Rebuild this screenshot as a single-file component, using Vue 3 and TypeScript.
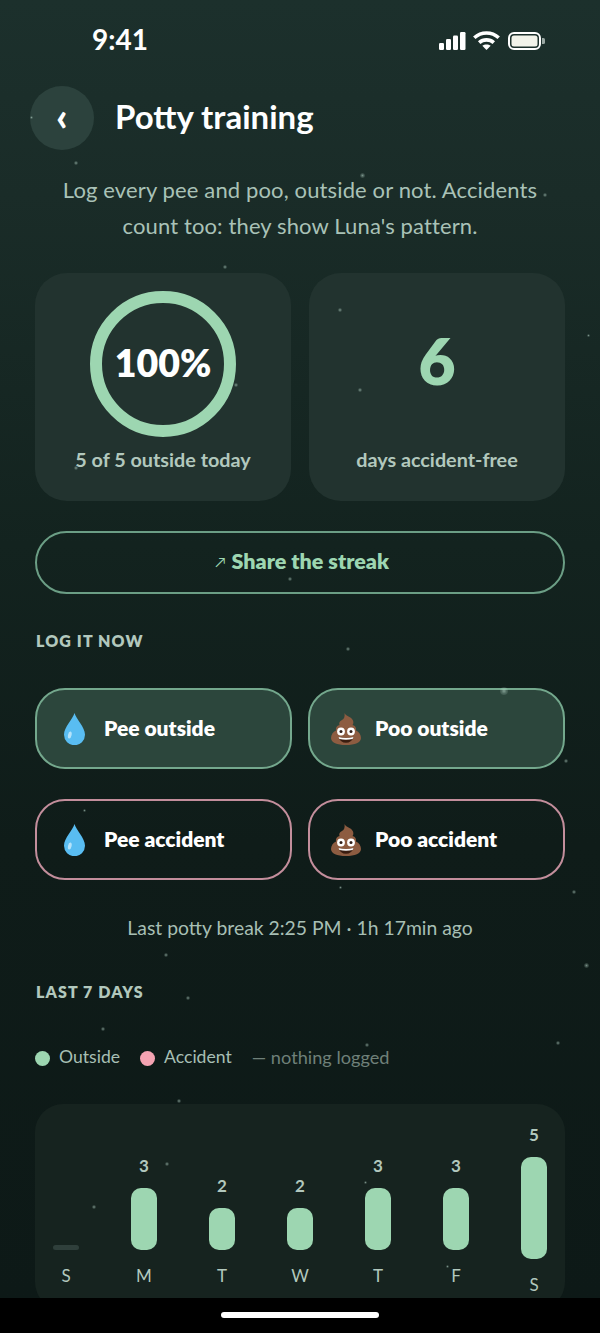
<script setup lang="ts">
interface Day {
  label: string;
  count: number;
}

interface LogButton {
  text: string;
  kind: 'pee' | 'poo';
  tone: 'good' | 'bad';
}

const days: Day[] = [
  { label: 'S', count: 0 },
  { label: 'M', count: 3 },
  { label: 'T', count: 2 },
  { label: 'W', count: 2 },
  { label: 'T', count: 3 },
  { label: 'F', count: 3 },
  { label: 'S', count: 5 },
];

const buttons: LogButton[] = [
  { text: 'Pee outside', kind: 'pee', tone: 'good' },
  { text: 'Poo outside', kind: 'poo', tone: 'good' },
  { text: 'Pee accident', kind: 'pee', tone: 'bad' },
  { text: 'Poo accident', kind: 'poo', tone: 'bad' },
];

// bar height grows with the count, an empty day only gets a small dash
const barHeight = (count: number) => (count === 0 ? 5 : 20 * count + 2);
const barOffset = (count: number) => Math.max(0, 93 - barHeight(count));

// background specks: x, y, size
const stars: number[][] = [
  [74, 161, 4], [360, 173, 5], [543, 193, 4], [30, 116, 3], [223, 265, 4],
  [338, 308, 4], [358, 388, 4], [234, 383, 4], [74, 466, 4], [288, 577, 4],
  [587, 334, 3], [346, 647, 4], [500, 687, 8], [564, 759, 4], [83, 809, 3],
  [339, 886, 3], [572, 890, 4], [186, 996, 4], [101, 1027, 4], [365, 1043, 4],
  [556, 1041, 4], [177, 1099, 4], [165, 1162, 4], [92, 1205, 4], [364, 1181, 3],
  [446, 1265, 3], [164, 953, 4], [584, 963, 5],
];
</script>

<template>
  <div class="phone">
    <div class="screen">
      <div class="status-bar">
        <span class="clock">9:41</span>
        <div class="status-icons">
          <svg width="27" height="18" viewBox="0 0 27 18" fill="#fff">
            <rect x="0" y="11" width="5" height="7" rx="1.2" />
            <rect x="7" y="7" width="5" height="11" rx="1.2" />
            <rect x="14" y="3.5" width="5" height="14.5" rx="1.2" />
            <rect x="21" y="0" width="5.5" height="18" rx="1.2" />
          </svg>
          <svg width="27" height="19" viewBox="0 0 27 19" fill="none" stroke="#fff" stroke-width="3.6">
            <path d="M1.300 6.800C8.200 .4 18.800 .4 25.700 6.800" />
            <path d="M6.200 11.600C10.300 7.900 16.700 7.900 20.800 11.600" />
            <path d="M13.500 19L9.300 14.800C11.700 13 15.300 13 17.700 14.800Z" fill="#fff" stroke="none" />
          </svg>
          <svg class="battery" width="37" height="18" viewBox="0 0 37 18">
            <rect x="1" y="1" width="31" height="16" rx="5" fill="none" stroke="#fff" stroke-width="2" />
            <rect x="3.500" y="3.500" width="26" height="11" rx="2.500" fill="#f2f3ea" />
            <path d="M34 6h1.500a1.500 1.500 0 0 1 1.500 1.500v3a1.500 1.500 0 0 1-1.500 1.500H34z" fill="#9aa8a3" />
          </svg>
        </div>
      </div>

      <div class="header">
        <button class="back">‹</button>
        <h1>Potty training</h1>
      </div>

      <p class="intro">Log every pee and poo, outside or not. Accidents<br />count too: they show Luna's pattern.</p>

      <div class="stats">
        <div class="stat-card">
          <div class="ring"><span>100%</span></div>
          <div class="stat-caption">5 of 5 outside today</div>
        </div>
        <div class="stat-card">
          <div class="big-number"><span>6</span></div>
          <div class="stat-caption">days accident-free</div>
        </div>
      </div>

      <button class="share"><span class="share-arrow">↗</span>Share the streak</button>

      <h2 class="section-title">LOG IT NOW</h2>

      <div class="log-grid">
        <button v-for="b in buttons" :key="b.text" class="log-btn" :class="b.tone">
          <span class="log-icon" :class="b.kind">
            <svg v-if="b.kind === 'pee'" width="21" height="32" viewBox="0 0 21 32">
              <path d="M10.500 0C9 6 0 14 0 21.800A10.300 10.200 0 0 0 21 21.800C21 14 12 6 10.500 0Z" fill="#59bdf2" />
              <ellipse cx="5.800" cy="22" rx="1.800" ry="3.600" fill="#b5e3fa" transform="rotate(12 5.800 22)" />
            </svg>
            <svg v-else width="30" height="32" viewBox="0 0 30 32">
              <path
                d="M13.500 0C14.500 3 20.500 3.500 22 7.500C22.700 9.500 22.300 11 21.500 12C24.300 12.600 25.500 15 25 17.500C28 19 30 21.800 30 25C30 29.500 24 32 15 32C6 32 0 29.500 0 25C0 21.800 2 19 5 17.500C4.500 15 5.700 12.600 8.500 12C7.700 10 8.500 8 11 7C13.200 6 14 3.500 13.500 0Z"
                fill="#8d5c41"
              />
              <circle cx="10" cy="18.500" r="3.900" fill="#fff" />
              <circle cx="20" cy="18.500" r="3.900" fill="#fff" />
              <circle cx="10" cy="18.500" r="1.500" fill="#33201a" />
              <circle cx="20" cy="18.500" r="1.500" fill="#33201a" />
              <path d="M7.500 24Q15 26 22.500 24Q20.500 29.800 15 29.800Q9.500 29.800 7.500 24Z" fill="#3a1d10" />
              <path d="M7.500 24Q15 26 22.500 24L21.600 26Q15 27.600 8.400 26Z" fill="#fff" />
            </svg>
          </span>
          {{ b.text }}
        </button>
      </div>

      <p class="last-break">Last potty break 2:25 PM · 1h 17min ago</p>

      <h2 class="section-title days-title">LAST 7 DAYS</h2>

      <div class="legend">
        <span class="legend-item"><i class="dot dot-good"></i>Outside</span>
        <span class="legend-item"><i class="dot dot-bad"></i>Accident</span>
        <span class="legend-muted">— nothing logged</span>
      </div>

      <div class="chart">
        <div
          v-for="(d, i) in days"
          :key="i"
          class="chart-col"
          :style="{ marginTop: barOffset(d.count) + 'px' }"
        >
          <span class="chart-count">{{ d.count > 0 ? d.count : '' }}</span>
          <div
            class="chart-bar"
            :class="{ empty: d.count === 0 }"
            :style="{ height: barHeight(d.count) + 'px' }"
          ></div>
          <span class="chart-day">{{ d.label }}</span>
        </div>
      </div>

      <span
        v-for="(s, i) in stars"
        :key="'star' + i"
        class="star"
        :style="{ left: s[0] + 'px', top: s[1] + 'px', width: s[2] + 'px', height: s[2] + 'px' }"
      ></span>
    </div>

    <div class="home-bar"><div class="home-indicator"></div></div>
  </div>
</template>

<style>
html,
body {
  margin: 0;
  background: #000;
}
</style>

<style scoped>
.phone {
  width: 600px;
  height: 1333px;
  overflow: hidden;
  display: flex;
  flex-direction: column;
  font-family: Lato, "Noto Sans", sans-serif;
  color: #fff;
}

.screen {
  position: relative;
  height: 1298px;
  flex: none;
  overflow: hidden;
  background: linear-gradient(180deg, #1c302c 0%, #1a2c28 15%, #13231f 42%, #0f1c19 65%, #0d1917 100%);
}

.status-bar {
  height: 80px;
  box-sizing: border-box;
  padding: 0 55px 0 92px;
  display: flex;
  align-items: center;
  justify-content: space-between;
}

.clock {
  margin-bottom: 2px;
  font-size: 28px;
  font-weight: 700;
}

.status-icons {
  margin-top: 1px;
  display: flex;
  align-items: center;
  gap: 7px;
}

.battery {
  margin-left: 1px;
}

.header {
  margin-top: 6px;
  padding-left: 30px;
  display: flex;
  align-items: center;
  gap: 21px;
}

.back {
  width: 64px;
  height: 64px;
  padding: 0 0 5px;
  border: none;
  border-radius: 50%;
  background: #2c423d;
  color: #fff;
  font-family: inherit;
  font-size: 40px;
  font-weight: 900;
  line-height: 1;
}

h1 {
  margin: 0 0 4px;
  font-size: 33px;
  font-weight: 700;
}

.intro {
  margin: 22px 0 0;
  text-align: center;
  font-size: 22px;
  letter-spacing: 0.13px;
  line-height: 36px;
  color: #a9c2b7;
}

.stats {
  margin: 29px 35px 0;
  display: flex;
  gap: 18px;
}

.stat-card {
  flex: 1;
  height: 228px;
  box-sizing: border-box;
  padding-top: 18px;
  display: flex;
  flex-direction: column;
  align-items: center;
  border-radius: 32px;
  background: #22332f;
}

.ring {
  width: 146px;
  height: 146px;
  box-sizing: border-box;
  border: 12px solid #9dd6b1;
  border-radius: 50%;
  padding-bottom: 4px;
  display: flex;
  align-items: center;
  justify-content: center;
  font-size: 37.500px;
  font-weight: 800;
}

.big-number {
  height: 146px;
  padding-bottom: 7px;
  box-sizing: border-box;
  display: flex;
  align-items: center;
  font-size: 64px;
  font-weight: 800;
  color: #9dd6b1;
}

.stat-caption {
  margin-top: 10px;
  font-size: 19.800px;
  line-height: 24px;
  font-weight: 700;
  color: #b2c8bd;
}

.share {
  margin: 30px 35px 0;
  width: 530px;
  height: 63px;
  padding: 0 0 3px 4px;
  display: flex;
  align-items: center;
  justify-content: center;
  gap: 6px;
  border: 2px solid #6b9e85;
  border-radius: 32px;
  background: transparent;
  color: #9dd6b1;
  font-family: inherit;
  font-size: 21.500px;
  font-weight: 800;
}

.share-arrow {
  font-size: 14px;
  font-weight: 400;
}

.section-title {
  margin: 37px 36px 0;
  font-size: 16px;
  line-height: 20px;
  font-weight: 800;
  letter-spacing: 1.100px;
  color: #b2c8bd;
}

.log-grid {
  margin: 37px 35px 0;
  display: grid;
  grid-template-columns: 257px 257px;
  gap: 30px 16px;
}

.log-btn {
  height: 81px;
  padding: 0 0 3px 27px;
  display: flex;
  align-items: center;
  border-radius: 30px;
  color: #fff;
  font-family: inherit;
  font-size: 21px;
  font-weight: 800;
}

.log-btn.good {
  border: 2px solid #74a88d;
  background: #2c463c;
}

.log-btn.bad {
  border: 2px solid #c38e9c;
  background: transparent;
}

.log-icon {
  margin-top: 3px;
  display: flex;
  align-items: center;
}

.log-icon.pee {
  width: 40px;
}

.log-icon.poo {
  width: 44px;
  margin-left: -6px;
}

.last-break {
  margin: 35px 0 0;
  text-align: center;
  font-size: 19.350px;
  line-height: 26px;
  color: #a7bfb4;
}

.days-title {
  margin-top: 41px;
}

.legend {
  margin: 43px 35px 0;
  display: flex;
  align-items: center;
  gap: 20px;
  font-size: 17.600px;
  line-height: 24px;
  color: #a7bfb4;
}

.legend-item {
  display: flex;
  align-items: center;
  gap: 9px;
}

.dot {
  width: 15px;
  height: 15px;
  border-radius: 50%;
  margin-top: 2px;
}

.dot-good {
  background: #9dd6b1;
}

.dot-bad {
  background: #f4a3b2;
}

.legend-muted {
  font-size: 18.200px;
  color: #6f8079;
}

.chart {
  margin: 35px 35px 0;
  height: 206px;
  box-sizing: border-box;
  padding: 22px 18px 0;
  display: flex;
  justify-content: space-between;
  align-items: flex-start;
  border-radius: 28px;
  background: #16231f;
}

.chart-col {
  width: 26px;
  display: flex;
  flex-direction: column;
  align-items: center;
}

.chart-count {
  height: 18px;
  margin-bottom: 13px;
  font-size: 17px;
  line-height: 18px;
  font-weight: 700;
  color: #b2c8bd;
}

.chart-bar {
  width: 26px;
  border-radius: 10px;
  background: #9dd6b1;
}

.chart-bar.empty {
  border-radius: 3px;
  background: #2f3f3b;
}

.chart-day {
  margin-top: 16px;
  font-size: 17px;
  line-height: 20px;
  color: #b2c8bd;
}

.star {
  position: absolute;
  border-radius: 50%;
  background: radial-gradient(circle, rgba(200, 232, 218, 0.55) 0%, rgba(200, 232, 218, 0.22) 45%, rgba(200, 232, 218, 0) 100%);
  pointer-events: none;
}

.home-bar {
  flex: 1;
  display: flex;
  justify-content: center;
  padding-top: 14px;
  background: #000;
}

.home-indicator {
  width: 158px;
  height: 6px;
  border-radius: 3px;
  background: #fff;
}
</style>
